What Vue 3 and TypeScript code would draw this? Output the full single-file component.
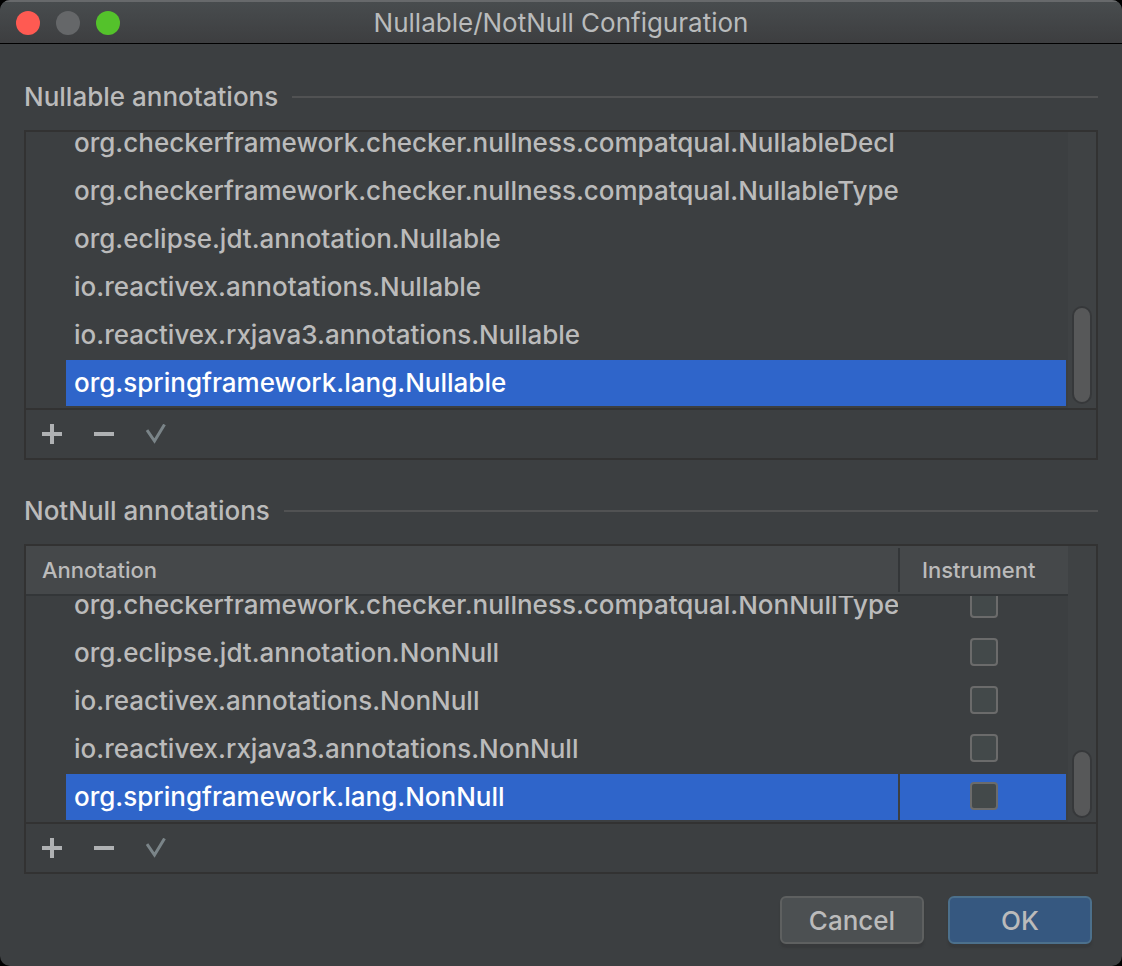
<script setup lang="ts">
import { onMounted, ref } from 'vue'

interface NotNullRow {
  name: string
  instrument: boolean
}

const nullable: string[] = [
  'org.checkerframework.checker.nullness.compatqual.NullableDecl',
  'org.checkerframework.checker.nullness.compatqual.NullableType',
  'org.eclipse.jdt.annotation.Nullable',
  'io.reactivex.annotations.Nullable',
  'io.reactivex.rxjava3.annotations.Nullable',
  'org.springframework.lang.Nullable',
]

const notNull = ref<NotNullRow[]>([
  { name: 'org.checkerframework.checker.nullness.compatqual.NonNullType', instrument: false },
  { name: 'org.eclipse.jdt.annotation.NonNull', instrument: false },
  { name: 'io.reactivex.annotations.NonNull', instrument: false },
  { name: 'io.reactivex.rxjava3.annotations.NonNull', instrument: false },
  { name: 'org.springframework.lang.NonNull', instrument: false },
])

const selectedNullable = ref(nullable.length - 1)
const selectedNotNull = ref(notNull.value.length - 1)

const nullableView = ref<HTMLElement | null>(null)
const notNullView = ref<HTMLElement | null>(null)

const tools = [
  { id: 'add', label: 'Add', path: 'M10 0V20M0 10H20' },
  { id: 'remove', label: 'Remove', path: 'M0 10H20' },
  { id: 'default', label: 'Set default', path: 'M1 6L8.500 17L18.500 0.500' },
]

// Keep the selected last row in view when the dialog opens.
onMounted(() => {
  for (const view of [nullableView.value, notNullView.value]) {
    if (view) view.scrollTop = view.scrollHeight
  }
})
</script>

<template>
  <main class="window">
    <header class="titlebar">
      <div class="lights">
        <button class="light close" type="button" aria-label="Close"></button>
        <button class="light minimize" type="button" aria-label="Minimize" disabled></button>
        <button class="light zoom" type="button" aria-label="Zoom"></button>
      </div>
      <h1 class="title">Nullable/NotNull Configuration</h1>
    </header>

    <div class="content">
      <section class="group">
        <h2 class="heading">Nullable annotations</h2>
        <div class="panel">
          <div class="body">
            <ul ref="nullableView" class="view list">
              <li
                v-for="(name, i) in nullable"
                :key="name"
                class="row"
                @click="selectedNullable = i"
              >
                <div class="cell name" :class="{ selected: selectedNullable === i }">{{ name }}</div>
              </li>
            </ul>
            <div class="track"><div class="thumb"></div></div>
          </div>
          <div class="toolbar">
            <button v-for="t in tools" :key="t.id" class="tool" :class="t.id" type="button" :aria-label="t.label">
              <svg viewBox="0 0 20 20" width="20" height="20"><path :d="t.path" /></svg>
            </button>
          </div>
        </div>
      </section>

      <section class="group">
        <h2 class="heading">NotNull annotations</h2>
        <div class="panel">
          <div class="body">
            <div ref="notNullView" class="view">
              <table class="table">
                <colgroup>
                  <col />
                  <col class="instrument-col" />
                </colgroup>
                <thead>
                  <tr>
                    <th scope="col"><div class="head first">Annotation</div></th>
                    <th scope="col"><div class="head second">Instrument</div></th>
                  </tr>
                </thead>
                <tbody>
                  <tr v-for="(row, i) in notNull" :key="row.name" @click="selectedNotNull = i">
                    <td class="annotation">
                      <div :id="`not-null-${i}`" class="cell name" :class="{ selected: selectedNotNull === i }">
                        {{ row.name }}
                      </div>
                    </td>
                    <td class="instrument">
                      <div class="cell tick" :class="{ selected: selectedNotNull === i }">
                        <input
                          v-model="row.instrument"
                          class="checkbox"
                          type="checkbox"
                          :aria-labelledby="`not-null-${i}`"
                        />
                      </div>
                    </td>
                  </tr>
                </tbody>
              </table>
            </div>
            <div class="track"><div class="thumb short"></div></div>
          </div>
          <div class="toolbar">
            <button v-for="t in tools" :key="t.id" class="tool" :class="t.id" type="button" :aria-label="t.label">
              <svg viewBox="0 0 20 20" width="20" height="20"><path :d="t.path" /></svg>
            </button>
          </div>
        </div>
      </section>

      <footer class="actions">
        <button class="button" type="button">Cancel</button>
        <button class="button primary" type="button">OK</button>
      </footer>
    </div>
  </main>
</template>

<style>
body {
  margin: 0;
  background: #000;
}
</style>

<style scoped>
.window,
.window * {
  box-sizing: border-box;
}

.window {
  display: flex;
  flex-direction: column;
  height: 100vh;
  min-height: 640px;
  overflow: hidden;
  border-radius: 10px;
  background: #3c3f41;
  color: #bbbbbb;
  font-family: Inter, "Liberation Sans", sans-serif;
  font-size: 26px;
  font-weight: 500;
}

button {
  margin: 0;
  padding: 0;
  border: 0;
  background: none;
  color: inherit;
  font: inherit;
}

.titlebar {
  display: grid;
  grid-template-columns: 1fr auto 1fr;
  align-items: center;
  flex: none;
  height: 44px;
  padding: 0 16px;
  border-top: 2px solid #67696b;
  border-bottom: 1px solid #000;
  background: linear-gradient(#484c4e, #3d3e40);
}

.lights {
  display: flex;
  gap: 16px;
}

.light {
  width: 24px;
  height: 24px;
  border-radius: 50%;
}

.close {
  background: #ff5a52;
}

.minimize {
  background: #656769;
}

.zoom {
  background: #54c22b;
}

.title {
  margin: 0;
  color: #b9bbbc;
  font-size: 26px;
  font-weight: 400;
  line-height: 32px;
}

.content {
  display: flex;
  flex: 1;
  flex-direction: column;
  min-height: 0;
  padding: 36px 24px 22px;
}

.group {
  display: flex;
  flex: 1 1 0;
  flex-direction: column;
  gap: 16px;
  min-height: 0;
}

.group + .group {
  margin-top: 34px;
}

.heading {
  display: flex;
  align-items: center;
  gap: 14px;
  margin: 0;
  font-size: 26px;
  font-weight: 500;
  line-height: 34px;
}

.heading::after {
  flex: 1;
  height: 2px;
  background: #515253;
  content: "";
}

.panel {
  display: flex;
  flex: 1;
  flex-direction: column;
  min-height: 0;
  border: 2px solid #323232;
}

.body {
  display: flex;
  flex: 1;
  min-height: 0;
}

.view {
  flex: 1;
  min-width: 0;
  overflow-y: auto;
  scrollbar-width: none;
}

.list {
  margin: 0;
  padding: 0;
  list-style: none;
}

.row,
.annotation {
  padding: 0 0 2px 40px;
}

.cell {
  height: 46px;
  line-height: 46px;
}

.name {
  padding-left: 8px;
  overflow: hidden;
  white-space: nowrap;
}

.row .name {
  margin-right: 2px;
}

.selected {
  background: #2f65ca;
  color: #ffffff;
}

.table {
  width: 100%;
  border-spacing: 0;
  table-layout: fixed;
}

.instrument-col {
  width: 170px;
}

th {
  position: sticky;
  top: 0;
  z-index: 1;
  padding: 2px 0;
  border-bottom: 2px solid #333638;
  background: #45484a;
  font-size: 22px;
  font-weight: 500;
  text-align: left;
}

.head {
  height: 44px;
  line-height: 44px;
}

.first {
  padding-left: 16px;
}

.second {
  padding-left: 22px;
  border-left: 2px solid #333638;
}

.instrument {
  padding: 0 2px 2px;
}

.tick {
  display: flex;
  align-items: center;
  justify-content: center;
  padding: 0 0 2px 2px;
}

.checkbox {
  width: 28px;
  height: 28px;
  margin: 0;
  appearance: none;
  border: 2px solid #6b6b6b;
  border-radius: 4px;
  background: #43494a;
}

.checkbox:checked {
  background: #6b8fbf;
}

.track {
  display: flex;
  flex: none;
  flex-direction: column;
  justify-content: flex-end;
  width: 28px;
  padding: 4px;
  background: #3f4244;
}

.thumb {
  height: 98px;
  border: 2px solid #36383a;
  border-radius: 10px;
  background: #575859;
}

.thumb.short {
  height: 68px;
}

.toolbar {
  display: flex;
  flex: none;
  height: 50px;
  border-top: 2px solid #323232;
}

.tool {
  display: grid;
  place-items: center;
  width: 52px;
}

.tool path {
  fill: none;
  stroke: #afb1b3;
  stroke-width: 4;
}

.default path {
  stroke: #7a8488;
  stroke-width: 3;
}

.actions {
  display: flex;
  flex: none;
  justify-content: flex-end;
  gap: 24px;
  margin-top: 22px;
  padding-right: 6px;
}

.button {
  width: 144px;
  height: 48px;
  border: 2px solid #5e6060;
  border-radius: 6px;
  background: #4c5052;
  box-shadow: 0 4px 2px #37393b;
  line-height: 46px;
}

.primary {
  border-color: #4c708c;
  background: #365880;
}
</style>
